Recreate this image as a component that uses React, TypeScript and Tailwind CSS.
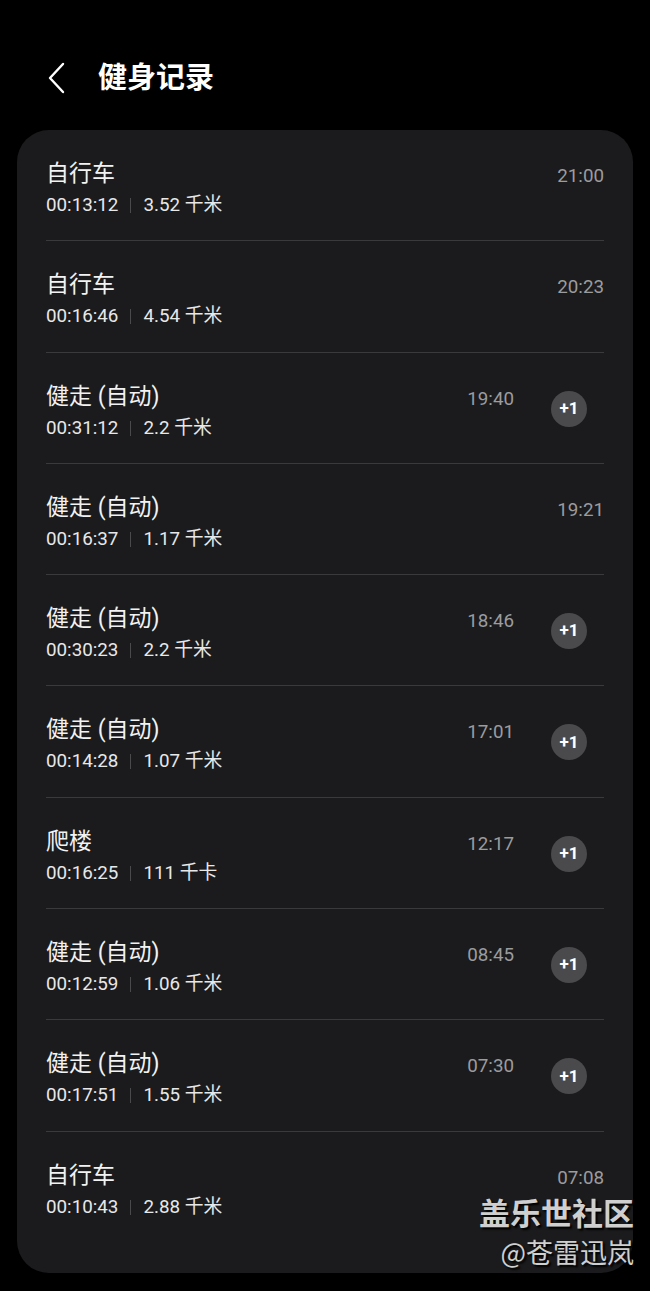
import React from "react";

type Row = { title: string; dur: string; dist: string; time: string; badge?: boolean };

const rows: Row[] = [
  { title: "自行车", dur: "00:13:12", dist: "3.52 千米", time: "21:00" },
  { title: "自行车", dur: "00:16:46", dist: "4.54 千米", time: "20:23" },
  { title: "健走 (自动)", dur: "00:31:12", dist: "2.2 千米", time: "19:40", badge: true },
  { title: "健走 (自动)", dur: "00:16:37", dist: "1.17 千米", time: "19:21" },
  { title: "健走 (自动)", dur: "00:30:23", dist: "2.2 千米", time: "18:46", badge: true },
  { title: "健走 (自动)", dur: "00:14:28", dist: "1.07 千米", time: "17:01", badge: true },
  { title: "爬楼", dur: "00:16:25", dist: "111 千卡", time: "12:17", badge: true },
  { title: "健走 (自动)", dur: "00:12:59", dist: "1.06 千米", time: "08:45", badge: true },
  { title: "健走 (自动)", dur: "00:17:51", dist: "1.55 千米", time: "07:30", badge: true },
  { title: "自行车", dur: "00:10:43", dist: "2.88 千米", time: "07:08" },
];

const font = { fontFamily: 'Roboto, "Noto Sans CJK SC", "Noto Sans", sans-serif' };

export default function App() {
  return (
    <div className="w-[650px] h-[1291px] bg-black text-white relative overflow-hidden" style={font}>
      <div className="h-[130px] flex items-start pt-[60px] pl-[46px]">
        <svg width="22" height="34" viewBox="0 0 22 34" className="mt-[1px]">
          <path d="M17 3 L4 17 L17 31" stroke="#ffffff" strokeWidth="2.4" fill="none" strokeLinecap="round" strokeLinejoin="round" />
        </svg>
        <div className="ml-[30px] text-[29px] leading-[36px] font-bold">健身记录</div>
      </div>
      <div className="mx-[17px] w-[616px] h-[1143px] bg-[#1b1b1d] rounded-[32px] px-[29px]">
        {rows.map((r, i) => (
          <div
            key={i}
            className={`flex items-start h-[111.3px] ${i < rows.length - 1 ? "border-b border-[#3a3a3c]" : ""}`}
          >
            <div className="flex-1 pt-[29px]">
              <div className="text-[23px] leading-[29px] text-[#f2f2f2]">{r.title}</div>
              <div className="mt-[6px] flex items-center text-[18.8px] leading-[23px] text-[#e8e8e8]">
                <span>{r.dur}</span>
                <span className="mx-[12px] w-px h-[15px] bg-[#4a4a4c]" />
                <span>{r.dist}</span>
              </div>
            </div>
            <div className="pt-[35px] text-[18.8px] leading-[23px] text-[#9c9c9e]">{r.time}</div>
            {r.badge && (
              <div className="ml-[37px] mr-[17px] mt-[38px] w-[36px] h-[36px] rounded-full bg-[#4a4a4c] flex items-center justify-center text-[17px] font-bold text-white">
                +1
              </div>
            )}
          </div>
        ))}
      </div>
      <div
        className="absolute right-[16px] top-[1193px] text-[31px] leading-[38px] font-bold text-[#cfcfcf]"
        style={{ textShadow: "2px 2px 2px #000", fontFamily: '"Noto Sans CJK SC", sans-serif' }}
      >
        盖乐世社区
      </div>
      <div
        className="absolute right-[16px] top-[1235px] text-[27px] leading-[34px] text-[#cfcfcf]"
        style={{ textShadow: "2px 2px 2px #000", fontFamily: '"Noto Sans CJK SC", sans-serif' }}
      >
        @苍雷迅岚
      </div>
    </div>
  );
}
